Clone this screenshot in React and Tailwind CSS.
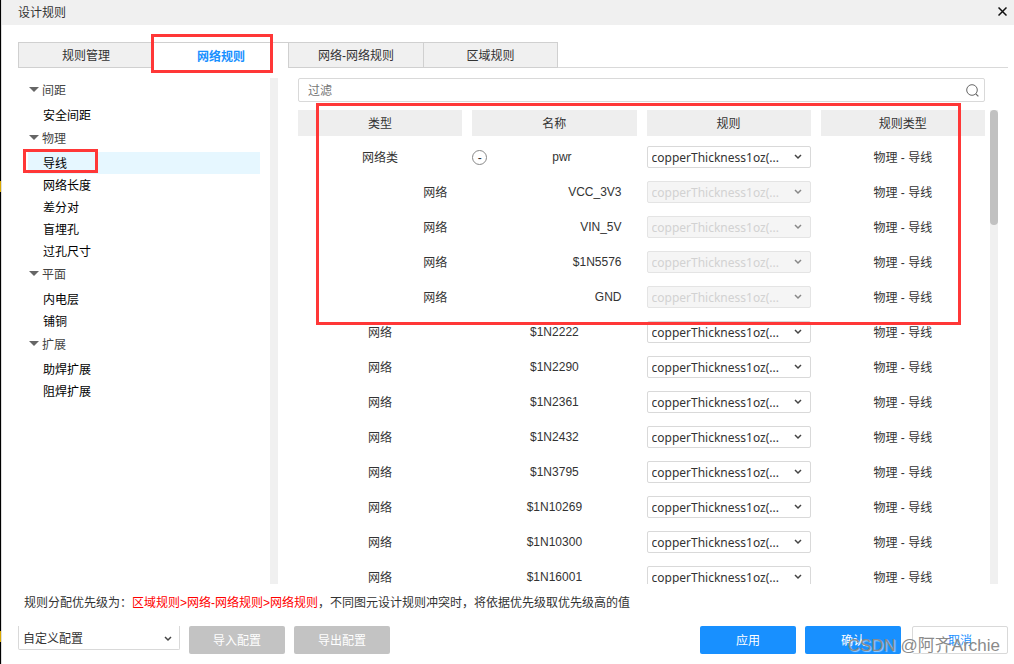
import React, { useState } from "react";

const TABS = ["规则管理", "网络规则", "网络-网络规则", "区域规则"];

const MENU = [
  { title: "间距", items: ["安全间距"] },
  { title: "物理", items: ["导线", "网络长度", "差分对", "盲埋孔", "过孔尺寸"] },
  { title: "平面", items: ["内电层", "铺铜"] },
  { title: "扩展", items: ["助焊扩展", "阻焊扩展"] },
];

const ROWS = [
  { type: "网络类", name: "pwr", group: true },
  { type: "网络", name: "VCC_3V3", child: true },
  { type: "网络", name: "VIN_5V", child: true },
  { type: "网络", name: "$1N5576", child: true },
  { type: "网络", name: "GND", child: true },
  { type: "网络", name: "$1N2222" },
  { type: "网络", name: "$1N2290" },
  { type: "网络", name: "$1N2361" },
  { type: "网络", name: "$1N2432" },
  { type: "网络", name: "$1N3795" },
  { type: "网络", name: "$1N10269" },
  { type: "网络", name: "$1N10300" },
  { type: "网络", name: "$1N16001" },
];

function Chevron({ className }) {
  return (
    <svg viewBox="0 0 8 6" className={`pointer-events-none absolute h-[6px] w-[8px] ${className}`}>
      <path d="M1 1l3 3 3-3" fill="none" stroke="currentColor" strokeWidth="1.5" />
    </svg>
  );
}

function RuleSelect({ label, disabled }) {
  return (
    <div className="relative">
      <select
        aria-label={label}
        disabled={disabled}
        className="block h-[22px] w-full appearance-none rounded-[2px] border border-[#d9d9d9] bg-white pt-[2px] pl-1 font-['Noto_Sans','Noto_Sans_CJK_SC',sans-serif] text-[12px] leading-[18px] text-[#333] disabled:border-[#e4e4e4] disabled:bg-[#f5f5f5] disabled:text-[#d2d2d2] disabled:opacity-100"
      >
        <option>copperThickness1oz(...</option>
      </select>
      <Chevron className={`top-[8px] right-[9px] ${disabled ? "text-[#888]" : "text-[#444]"}`} />
    </div>
  );
}

function Tabs({ active, onChange }) {
  return (
    <div className="mt-[17px] mr-[6px] ml-[18px] flex h-[26px]" role="tablist">
      {TABS.map((tab, i) => {
        const selected = i === active;
        return (
          <button
            key={tab}
            role="tab"
            aria-selected={selected}
            onClick={() => onChange(i)}
            className={`relative w-[135px] border-t border-l border-[#d0d0d0] pt-[2px] ${
              selected ? "border-l-transparent bg-white font-bold text-[#1890ff]" : "border-b bg-[#f0f0f0]"
            } ${i === TABS.length - 1 ? "border-r" : ""}`}
          >
            {tab}
            {selected && (
              <span className="absolute -top-[9px] -left-[3px] h-[39px] w-[122px] border-3 border-[#ff3737]" />
            )}
          </button>
        );
      })}
      <div className="flex-1 border-b border-[#d9d9d9]" />
    </div>
  );
}

function SideMenu({ active, onSelect }) {
  return (
    <nav className="ml-[28px] w-[232px] shrink-0">
      {MENU.map((group) => (
        <div key={group.title}>
          <div className="flex h-[26px] items-center">
            <svg viewBox="0 0 10 5" className="mb-[3px] ml-px h-[5px] w-[10px] text-[#666]">
              <path d="M0 0h10L5 5z" fill="currentColor" />
            </svg>
            <span className="ml-[3px] text-[#444]">{group.title}</span>
          </div>
          {group.items.map((item) => (
            <button
              key={item}
              onClick={() => onSelect(item)}
              className={`relative block h-[22px] w-full pt-[2px] pl-[15px] text-left text-black ${
                item === active ? "bg-[#e6f7ff]" : ""
              }`}
            >
              {item}
              {item === active && (
                <span className="absolute -top-[3px] -left-[5px] h-[24px] w-[75px] border-3 border-[#ff3737]" />
              )}
            </button>
          ))}
        </div>
      ))}
    </nav>
  );
}

function RuleTable() {
  return (
    <div className="min-w-0 flex-1 overflow-hidden">
      <table className="-ml-[10px] w-[calc(100%+20px)] table-fixed border-separate border-spacing-x-[10px] border-spacing-y-0">
        <thead>
          <tr>
            {["类型", "名称", "规则", "规则类型"].map((title) => (
              <th
                key={title}
                className="h-[29px] border-b-3 border-white bg-[#eee] bg-clip-padding p-0 pt-[2px] font-normal"
              >
                {title}
              </th>
            ))}
          </tr>
        </thead>
        <tbody>
          {ROWS.map((row) => (
            <tr key={row.name} className="h-[35px]">
              <td className={`p-0 pt-[2px] ${row.child ? "pr-[15px] text-right" : "text-center"}`}>{row.type}</td>
              <td
                className={`p-0 font-['Liberation_Sans',Arial,sans-serif] ${
                  row.child ? "pr-[15px] text-right" : "text-center"
                }`}
              >
                {row.group ? (
                  <div className="flex items-center">
                    <button
                      aria-label="收起"
                      className="mt-[2px] h-[15px] w-[15px] rounded-full border border-[#888] leading-[12px]"
                    >
                      -
                    </button>
                    <span className="flex-1">{row.name}</span>
                  </div>
                ) : (
                  row.name
                )}
              </td>
              <td className="p-0">
                <RuleSelect label={`${row.name} 规则`} disabled={row.child} />
              </td>
              <td className="p-0 pt-[2px] text-center">物理 - 导线</td>
            </tr>
          ))}
        </tbody>
      </table>
    </div>
  );
}

function Footer() {
  return (
    <footer className="relative shrink-0 pb-[10px]">
      <p className="px-[24px] pt-[9px] pb-[13px] leading-[20px]">
        规则分配优先级为：
        <span className="text-[#f00]">区域规则&gt;网络-网络规则&gt;网络规则</span>
        ，不同图元设计规则冲突时，将依据优先级取优先级高的值
      </p>
      <div className="mr-[6px] ml-[18px] flex items-start gap-[9px]">
        <div className="relative w-[162px]">
          <select
            aria-label="配置"
            className="block h-[24px] w-full appearance-none rounded-b-[2px] border border-t-0 border-[#d9d9d9] bg-white pt-[2px] pl-1"
          >
            <option>自定义配置</option>
          </select>
          <Chevron className="top-[10px] right-[8px] text-[#444]" />
        </div>
        <button className="h-[28px] w-[96px] rounded-[2px] bg-[#c3c3c3] pt-[2px] text-white">导入配置</button>
        <button className="h-[28px] w-[96px] rounded-[2px] bg-[#c3c3c3] pt-[2px] text-white">导出配置</button>
        <div className="flex-1" />
        <button className="h-[28px] w-[96px] rounded-[2px] bg-[#1890ff] pt-[2px] text-white">应用</button>
        <button className="h-[28px] w-[96px] rounded-[2px] bg-[#1890ff] pt-[2px] text-white">确认</button>
        <button className="ml-[2px] h-[28px] w-[96px] rounded-[2px] border border-[#d9d9d9] bg-white pt-[2px] text-[#1890ff]">
          取消
        </button>
      </div>
      <span className="pointer-events-none absolute right-[14px] bottom-[6px] text-[17px] leading-[24px] whitespace-nowrap text-[#8a8a8a] text-shadow-[1px_1px_1px_rgb(255_255_255_/_0.6)]">
        CSDN @阿齐Archie
      </span>
    </footer>
  );
}

export default function App() {
  const [tab, setTab] = useState(1);
  const [item, setItem] = useState("导线");

  return (
    <div className="relative flex h-screen flex-col overflow-hidden bg-white font-['Liberation_Sans','Noto_Sans_CJK_SC',sans-serif] text-[12px] leading-[18px] text-[#333]">
      {/* window edge */}
      <div className="absolute inset-y-0 left-0 w-[2px] border-r border-[#ddd] bg-black" />
      <div className="absolute top-[181px] left-0 h-[11px] w-px bg-[#d9a800]" />
      <div className="absolute top-[631px] left-0 h-[11px] w-px bg-[#d9a800]" />

      <header className="ml-[2px] flex h-[25px] shrink-0 items-center justify-between bg-[#f0f0f0] pr-[7px] pl-[16px]">
        <h1>设计规则</h1>
        <button aria-label="关闭" className="pb-[3px]">
          <svg viewBox="0 0 9 9" className="block h-[9px] w-[9px] text-[#111]">
            <path d="M.5.5l8 8M8.5.5l-8 8" fill="none" stroke="currentColor" strokeWidth="1.5" />
          </svg>
        </button>
      </header>

      <Tabs active={tab} onChange={setTab} />

      <main className="mt-[10px] flex min-h-0 flex-1">
        <SideMenu active={item} onSelect={setItem} />
        <div className="ml-[10px] w-[8px] shrink-0 bg-[#f0f0f0]" />

        <section className="relative mr-[16px] ml-[20px] flex min-w-0 flex-1 flex-col">
          <div className="mr-[13px] flex h-[24px] shrink-0 items-center rounded-[2px] border border-[#d9d9d9] pr-[5px] pl-[9px]">
            <input
              aria-label="过滤"
              placeholder="过滤"
              className="min-w-0 flex-1 pt-[2px] outline-none placeholder:text-[#757575]"
            />
            <svg viewBox="0 0 13 13" className="h-[13px] w-[13px] text-[#666]">
              <circle cx="6" cy="6" r="5.3" fill="none" stroke="currentColor" strokeWidth="1" />
              <path d="M9.8 9.8l2.6 2.6" stroke="currentColor" strokeWidth="1.2" />
            </svg>
          </div>
          <div className="mt-[8px] flex min-h-0 flex-1">
            <RuleTable />
            <div className="ml-[5px] w-[8px] bg-[#f0f0f0]">
              <div className="h-[115px] rounded-full bg-[#c1c1c1]" />
            </div>
          </div>
          <div className="pointer-events-none absolute top-[25px] right-[37px] left-[18px] h-[222px] border-3 border-[#ff3737]" />
        </section>
      </main>

      <Footer />
    </div>
  );
}
